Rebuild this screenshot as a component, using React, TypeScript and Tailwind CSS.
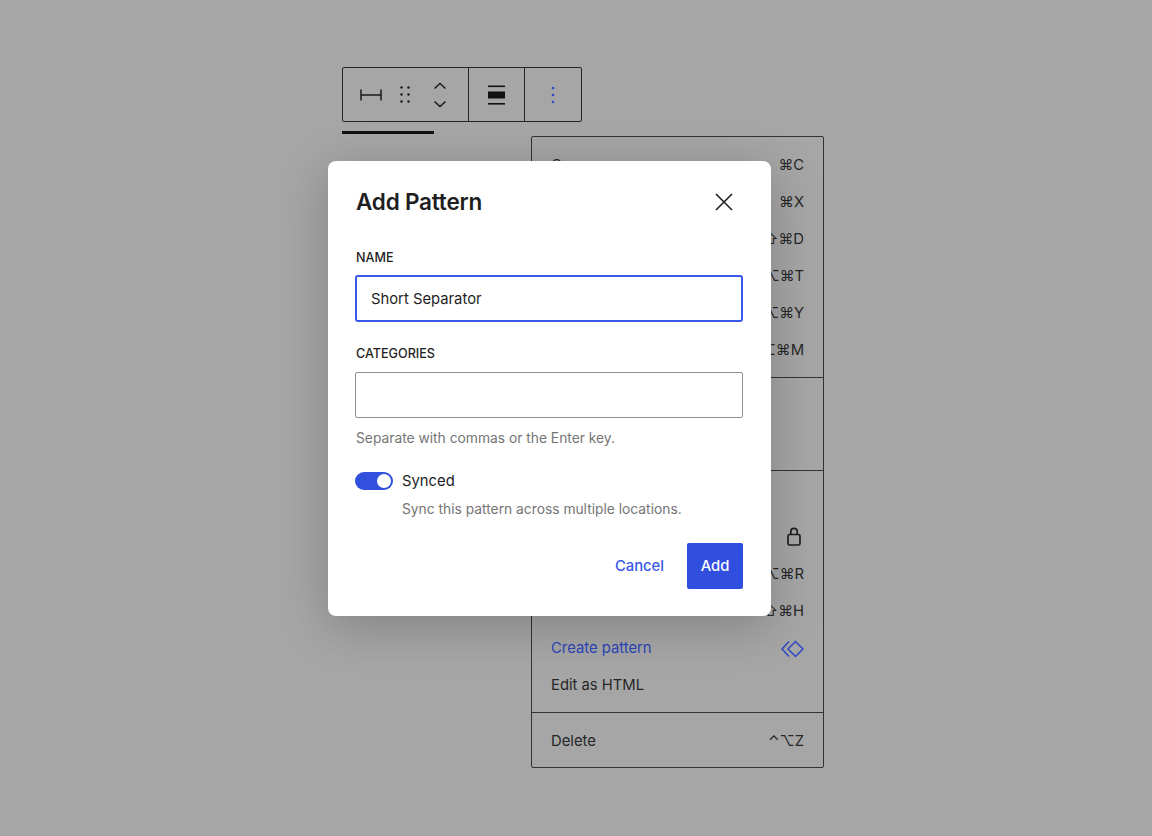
const sans = { fontFamily: "Inter, 'DejaVu Sans', sans-serif" };

const topRows = [
  ["Copy", "⌘C"],
  ["", "⌘X"],
  ["", "⇧⌘D"],
  ["", "⌥⌘T"],
  ["", "⌥⌘Y"],
  ["", "⌥⌘M"],
];

function Row({ label, hint, blue }: { label?: string; hint?: React.ReactNode; blue?: boolean }) {
  return (
    <div className={`h-[37px] px-[19px] flex items-center justify-between text-[14.8px] ${blue ? "text-[#2a45b8]" : "text-[#262626]"}`}>
      <span>{label}</span>
      <span className="flex items-center">{hint}</span>
    </div>
  );
}

function Toolbar() {
  return (
    <div className="flex w-[240px] h-[55px] border border-[#262626] rounded-[2px]">
      <div className="w-[126px] flex items-center pl-[17px] border-r border-[#262626]">
        <svg width="22" height="12" viewBox="0 0 22 12" fill="none" stroke="#1a1a1a" strokeWidth="1.5">
          <path d="M1 0.5V11.5M21 0.5V11.5M1 6H21" />
        </svg>
        <svg className="ml-[18px]" width="10" height="17" viewBox="0 0 10 17" fill="#1a1a1a">
          <circle cx="1.5" cy="1.5" r="1.2" />
          <circle cx="8.5" cy="1.5" r="1.2" />
          <circle cx="1.5" cy="8.5" r="1.2" />
          <circle cx="8.5" cy="8.5" r="1.2" />
          <circle cx="1.5" cy="15.5" r="1.2" />
          <circle cx="8.5" cy="15.5" r="1.2" />
        </svg>
        <svg className="ml-[23px]" width="14" height="26" viewBox="0 0 14 26" fill="none" stroke="#1a1a1a" strokeWidth="1.5">
          <path d="M1.5 6.5L7 1.5L12.5 6.5M1.5 19.5L7 24.5L12.5 19.5" />
        </svg>
      </div>
      <div className="w-[56px] flex items-center justify-center border-r border-[#262626]">
        <svg width="17" height="20" viewBox="0 0 17 20" fill="#111">
          <rect width="17" height="1.6" y="0.5" />
          <rect width="17" height="7" y="6.5" />
          <rect width="17" height="1.6" y="18" />
        </svg>
      </div>
      <div className="flex-1 flex items-center justify-center">
        <svg width="4" height="18" viewBox="0 0 4 18" fill="#2f47c4">
          <circle cx="2" cy="2" r="1.3" />
          <circle cx="2" cy="9" r="1.3" />
          <circle cx="2" cy="16" r="1.3" />
        </svg>
      </div>
    </div>
  );
}

function Menu() {
  return (
    <div className="w-[293px] border border-[#333] rounded-[2px]">
      <div className="pt-[10px] pb-[8px] border-b border-[#333]">
        {topRows.map(([l, h]) => (
          <Row key={h} label={l} hint={h} />
        ))}
      </div>
      <div className="h-[93px] border-b border-[#333]" />
      <div className="pt-[10px] pb-[8px] border-b border-[#333]">
        <Row />
        <Row
          hint={
            <svg className="mr-[3px]" width="14" height="19" viewBox="0 0 14 19" fill="none" stroke="#1f1f1f" strokeWidth="1.7">
              <rect x="1" y="7.5" width="12" height="10.5" rx="1.5" />
              <path d="M3.8 7.5V4.6a3.2 3.2 0 0 1 6.4 0v2.9" />
            </svg>
          }
        />
        <div className="h-[1px]" />
        <Row hint="⌥⌘R" />
        <Row hint="⇧⌘H" />
        <Row
          label="Create pattern"
          blue
          hint={
            <svg width="23" height="18" viewBox="0 0 23 18" fill="none" stroke="#2f47c4" strokeWidth="1.5">
              <path d="M8 1.5L1 9L8 16.5" />
              <path d="M14.5 1.5L22 9L14.5 16.5L7 9Z" />
            </svg>
          }
        />
        <Row label="Edit as HTML" />
      </div>
      <div className="pt-[10px] pb-[7px]">
        <Row label="Delete" hint="⌃⌥Z" />
      </div>
    </div>
  );
}

function Dialog() {
  return (
    <div className="absolute left-[328px] top-[161px] w-[443px] h-[455px] bg-white rounded-[8px] shadow-[0_10px_50px_rgba(0,0,0,0.22)] px-[28px] pt-[26px]">
      <div className="flex items-center justify-between h-[29px]">
        <h1 className="text-[22.5px] font-semibold text-[#1e1e1e] tracking-[-0.2px]">Add Pattern</h1>
        <svg className="mr-[10px]" width="18" height="18" viewBox="0 0 18 18" fill="none" stroke="#1e1e1e" strokeWidth="1.6">
          <path d="M1 1L17 17M17 1L1 17" />
        </svg>
      </div>
      <div className="mt-[34px] text-[12.6px] font-medium text-[#1e1e1e] leading-[16px]">NAME</div>
      <div className="mt-[9px] -ml-[1px] h-[47px] border-2 border-[#3858e9] rounded-[3px] flex items-center pl-[14px] pt-[1px] text-[14.8px] text-[#1e1e1e]">
        Short Separator
      </div>
      <div className="mt-[24px] text-[12.6px] font-medium text-[#1e1e1e] leading-[16px]">CATEGORIES</div>
      <div className="mt-[10px] -ml-[1px] h-[46px] border border-[#8f8f8f] rounded-[2px]" />
      <p className="mt-[11px] text-[13.8px] leading-[18px] text-[#757575]">Separate with commas or the Enter key.</p>
      <div className="mt-[22px] flex items-center h-[24px]">
        <div className="-ml-[1px] w-[38px] h-[18px] rounded-full bg-[#3050dd] flex items-center justify-end pr-[2px]">
          <div className="w-[14px] h-[14px] rounded-full bg-white" />
        </div>
        <span className="ml-[9px] text-[14.8px] text-[#1e1e1e]">Synced</span>
      </div>
      <p className="mt-[7px] ml-[46px] text-[13.8px] leading-[18px] text-[#757575]">Sync this pattern across multiple locations.</p>
      <div className="mt-[25px] flex items-center justify-end">
        <span className="text-[14.8px] font-medium text-[#3858e9]">Cancel</span>
        <div className="ml-[23px] w-[56px] h-[46px] bg-[#304fdf] rounded-[2px] flex items-center justify-center text-[14.8px] font-medium text-white">
          Add
        </div>
      </div>
    </div>
  );
}

export default function App() {
  return (
    <div style={sans} className="relative w-[1152px] h-[836px] overflow-hidden bg-[#a6a6a6] pl-[342px] pt-[67px]">
      <Toolbar />
      <div className="mt-[9px] w-[92px] h-[3px] bg-[#111]" />
      <div className="mt-[2px] ml-[189px]">
        <Menu />
      </div>
      <Dialog />
    </div>
  );
}
